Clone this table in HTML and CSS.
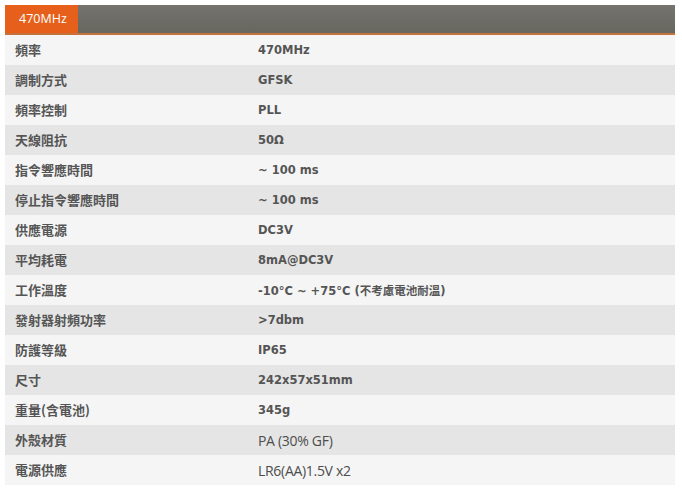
FILE: index.html
```html
<!DOCTYPE html>
<html lang="zh-Hant">
<head>
<meta charset="utf-8">
<link rel="stylesheet" href="styles.css">
</head>
<body>
<div class="spec">
  <div class="tabbar"><div class="tab">470MHz</div></div>
  <div class="rows">
    <div class="row"><div class="k">頻率</div><div class="v">470MHz</div></div>
    <div class="row"><div class="k">調制方式</div><div class="v">GFSK</div></div>
    <div class="row"><div class="k">頻率控制</div><div class="v">PLL</div></div>
    <div class="row"><div class="k">天線阻抗</div><div class="v">50Ω</div></div>
    <div class="row"><div class="k">指令響應時間</div><div class="v">~ 100 ms</div></div>
    <div class="row"><div class="k">停止指令響應時間</div><div class="v">~ 100 ms</div></div>
    <div class="row"><div class="k">供應電源</div><div class="v">DC3V</div></div>
    <div class="row"><div class="k">平均耗電</div><div class="v">8mA@DC3V</div></div>
    <div class="row"><div class="k">工作溫度</div><div class="v">-10°C ~ +75°C (不考慮電池耐溫)</div></div>
    <div class="row"><div class="k">發射器射頻功率</div><div class="v">&gt;7dbm</div></div>
    <div class="row"><div class="k">防護等級</div><div class="v">IP65</div></div>
    <div class="row"><div class="k">尺寸</div><div class="v">242x57x51mm</div></div>
    <div class="row"><div class="k">重量(含電池)</div><div class="v">345g</div></div>
    <div class="row"><div class="k light">外殼材質</div><div class="v alt">PA (30% GF)</div></div>
    <div class="row"><div class="k light">電源供應</div><div class="v alt">LR6(AA)1.5V x2</div></div>
  </div>
</div>
</body>
</html>
```
FILE: styles.css
```css
html, body { margin: 0; padding: 0; background: #fff; }
body { padding: 5px 7px 0 5px; }
.spec { width: 670px; }
.tabbar {
  height: 28px;
  background: linear-gradient(#74736d, #67665f);
  border-bottom: 2px solid #c4733d;
  display: flex;
}
.tab {
  width: 73px;
  background: #e6601b;
  color: #fff;
  font-family: "Open Sans", "Liberation Sans", sans-serif;
  font-size: 12.5px;
  line-height: 28px;
  padding-left: 14px;
  box-sizing: border-box;
}
.row {
  display: flex;
  height: 30px;
  align-items: center;
  background: #f5f5f5;
  color: #555;
}
.row:nth-child(even) { background: #e5e5e5; }
.k {
  width: 253px;
  padding-left: 10px;
  box-sizing: border-box;
  font-family: "Noto Sans CJK TC", sans-serif;
  font-weight: 700;
  font-size: 13px;
  margin-top: -2px;
}
.k.light { font-weight: 600; }
.v {
  font-family: "DejaVu Sans", "Noto Sans CJK TC", sans-serif;
  font-weight: 700;
  font-size: 11.5px;
}
.v.alt {
  font-family: "Open Sans", sans-serif;
  font-weight: 400;
  font-size: 14px;
  color: #4d4d4d;
  letter-spacing: -0.3px;
}
```
